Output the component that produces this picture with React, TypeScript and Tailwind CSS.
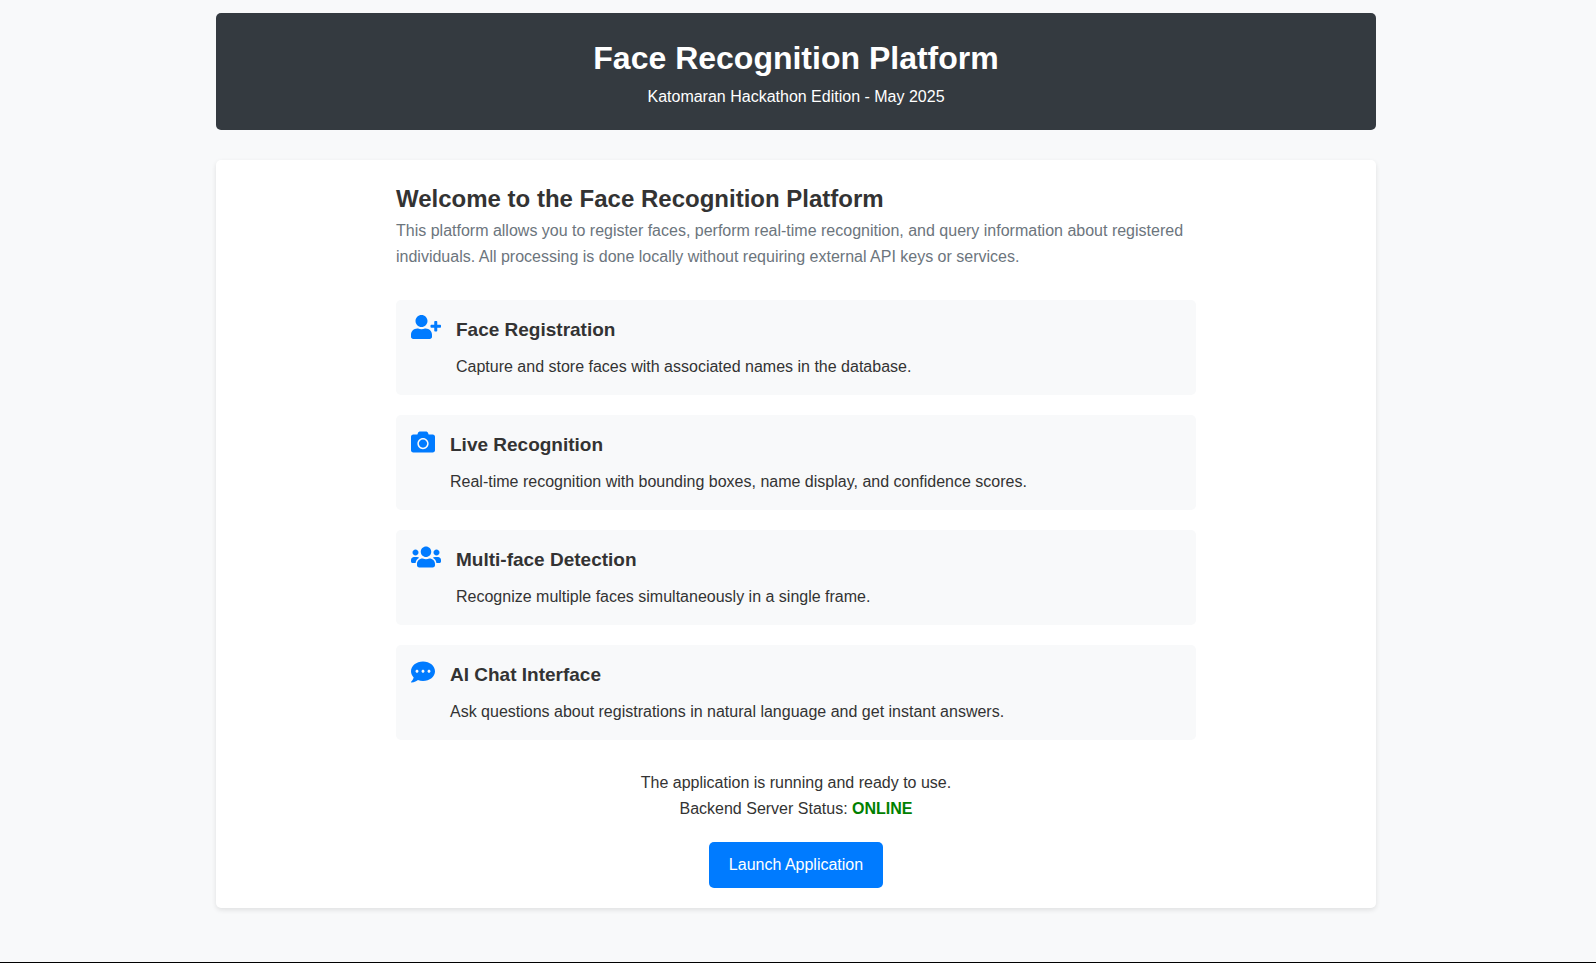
import { FaUserPlus, FaCamera, FaUsers, FaCommentDots } from "react-icons/fa";
import type { IconType } from "react-icons";

const features: { icon: IconType; iconWidth: string; title: string; text: string }[] = [
  { icon: FaUserPlus, iconWidth: "w-[30px]", title: "Face Registration", text: "Capture and store faces with associated names in the database." },
  { icon: FaCamera, iconWidth: "w-6", title: "Live Recognition", text: "Real-time recognition with bounding boxes, name display, and confidence scores." },
  { icon: FaUsers, iconWidth: "w-[30px]", title: "Multi-face Detection", text: "Recognize multiple faces simultaneously in a single frame." },
  { icon: FaCommentDots, iconWidth: "w-6", title: "AI Chat Interface", text: "Ask questions about registrations in natural language and get instant answers." },
];

export default function App() {
  return (
    <div className="min-h-screen border-b border-black bg-[#f8f9fa] pt-[13px] pr-6 pb-[54px] pl-5 font-['Liberation_Sans',Arial,sans-serif] text-base leading-[26px] text-[#333]">
      <div className="mx-auto flex max-w-[1160px] flex-col gap-[30px]">
        <header className="rounded-[5px] bg-[#343a40] p-5 text-center text-white">
          <h1 className="text-[32px] leading-[51px] font-bold">Face Recognition Platform</h1>
          <p>Katomaran Hackathon Edition - May 2025</p>
        </header>
        <main className="rounded-[5px] bg-white p-5 shadow-[0_2px_5px_rgba(0,0,0,0.1)]">
          <div className="mx-auto flex max-w-[800px] flex-col">
            <h2 className="text-2xl leading-[38px] font-bold">Welcome to the Face Recognition Platform</h2>
            <p className="text-[#6c757d]">
              This platform allows you to register faces, perform real-time recognition, and query information about registered individuals. All processing is done locally without requiring external API keys or services.
            </p>
            <ul className="mt-[30px] flex flex-col gap-5">
              {features.map(({ icon: Icon, iconWidth, title, text }) => (
                <li key={title} className="flex items-start gap-[15px] rounded-[5px] bg-[#f8f9fa] p-[15px]">
                  <Icon className={`h-6 shrink-0 text-[#007bff] ${iconWidth}`} aria-hidden="true" />
                  <div>
                    <h3 className="mb-[10px] text-[19px] leading-[29px] font-bold">{title}</h3>
                    <p>{text}</p>
                  </div>
                </li>
              ))}
            </ul>
            <div className="mt-[30px] text-center">
              <p>The application is running and ready to use.</p>
              <p>
                Backend Server Status: <strong className="text-[#008000]">ONLINE</strong>
              </p>
              <a href="#launch" className="mt-5 inline-block rounded-[5px] bg-[#007bff] px-5 py-[10px] align-top text-white">
                Launch Application
              </a>
            </div>
          </div>
        </main>
      </div>
    </div>
  );
}
